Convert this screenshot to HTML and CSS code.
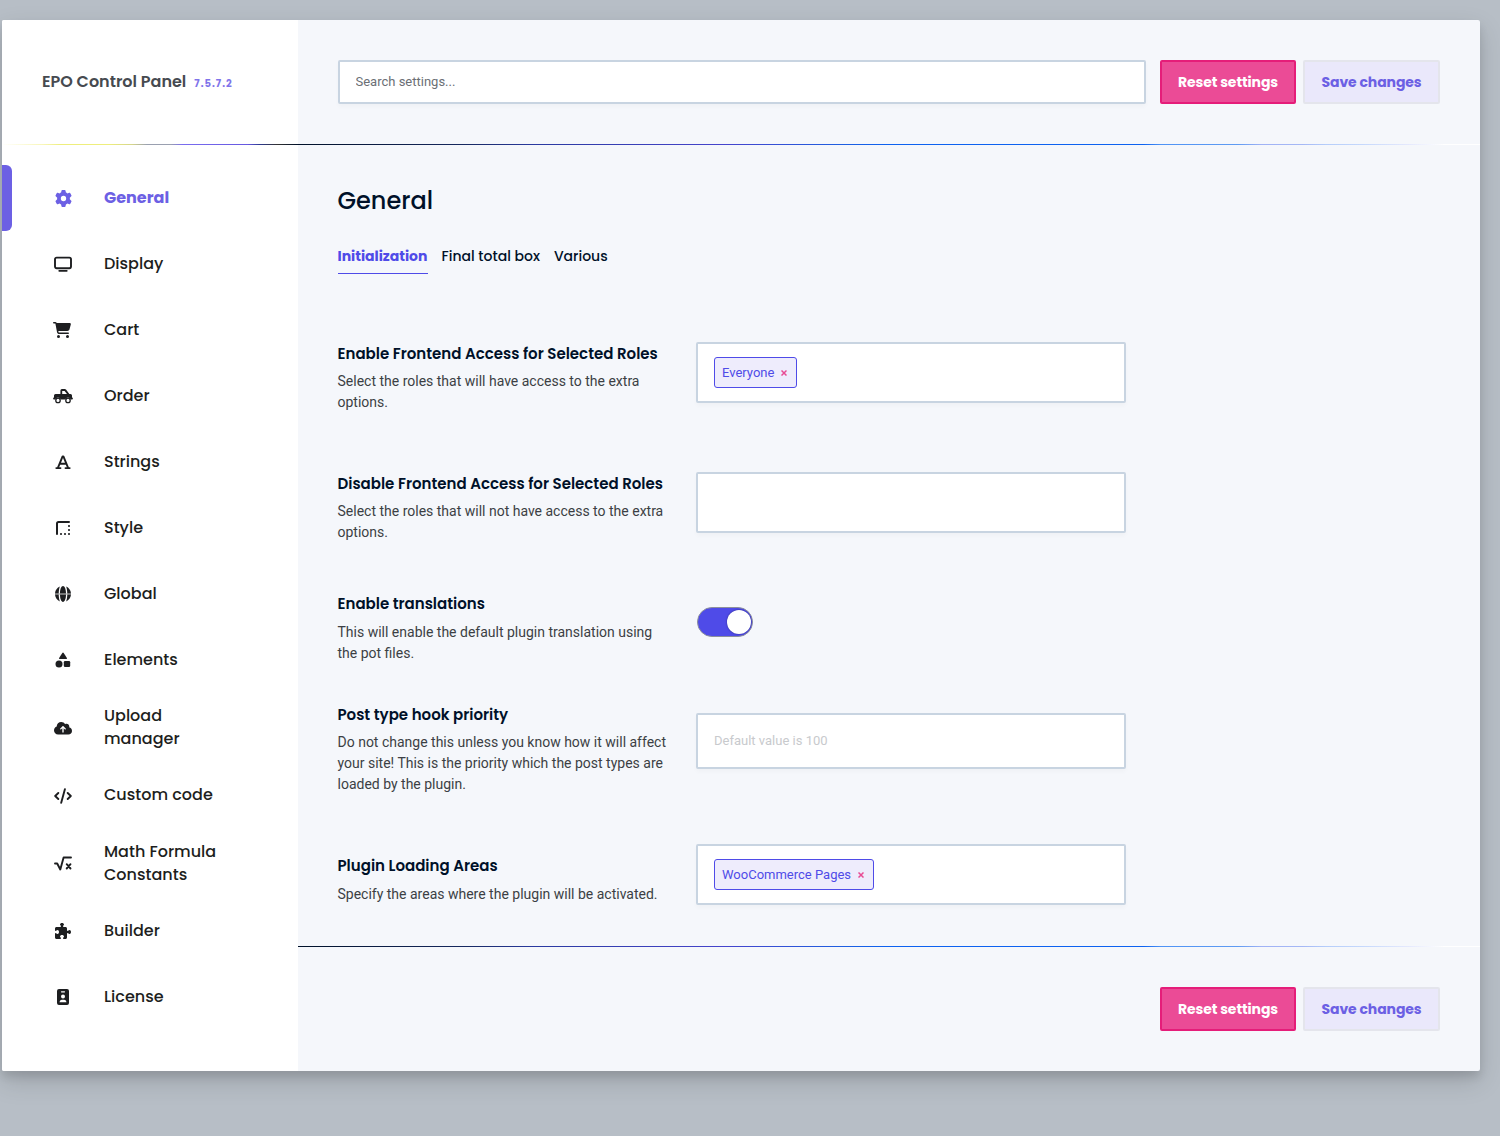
FILE: index.html
```html
<!DOCTYPE html>
<html lang="en">
<head>
<meta charset="utf-8">
<title>EPO Control Panel</title>
<link rel="stylesheet" href="styles.css">
</head>
<body>
<div class="panel">
  <aside class="sidebar">
    <div class="brand"><span class="brand-name">EPO Control Panel</span><span class="version">7.5.7.2</span></div>
    <nav class="nav">
      <a class="item active"><svg class="icon" width="17" height="17" viewBox="0 0 512 512"><path d="M495.9 166.6c3.2 8.7 .5 18.4-6.4 24.6l-43.3 39.4c1.1 8.3 1.7 16.8 1.7 25.4s-.6 17.1-1.7 25.4l43.3 39.4c6.9 6.2 9.6 15.9 6.4 24.6c-4.4 11.9-9.7 23.3-15.8 34.3l-4.7 8.1c-6.6 11-14 21.4-22.1 31.2c-5.9 7.2-15.7 9.6-24.5 6.8l-55.7-17.7c-13.4 10.3-28.2 18.9-44 25.4l-12.5 57.1c-2 9.1-9 16.3-18.2 17.8c-13.8 2.3-28 3.5-42.5 3.5s-28.7-1.2-42.5-3.5c-9.2-1.5-16.2-8.7-18.2-17.8l-12.5-57.1c-15.8-6.5-30.6-15.1-44-25.4L83.1 425.9c-8.8 2.8-18.6 .3-24.5-6.8c-8.1-9.8-15.5-20.2-22.1-31.2l-4.7-8.1c-6.1-11-11.4-22.4-15.8-34.3c-3.2-8.7-.5-18.4 6.4-24.6l43.3-39.4C64.6 273.1 64 264.6 64 256s.6-17.1 1.7-25.4L22.4 191.2c-6.9-6.2-9.6-15.9-6.4-24.6c4.4-11.9 9.7-23.3 15.8-34.3l4.7-8.1c6.6-11 14-21.4 22.1-31.2c5.9-7.2 15.7-9.6 24.5-6.8l55.7 17.7c13.4-10.3 28.2-18.9 44-25.4l12.5-57.1c2-9.1 9-16.3 18.2-17.8C227.3 1.2 241.5 0 256 0s28.7 1.2 42.5 3.5c9.2 1.5 16.2 8.7 18.2 17.8l12.5 57.1c15.8 6.5 30.6 15.1 44 25.4l55.7-17.7c8.8-2.8 18.6-.3 24.5 6.8c8.1 9.8 15.5 20.2 22.1 31.2l4.7 8.1c6.1 11 11.4 22.4 15.8 34.3zM256 336a80 80 0 1 0 0-160 80 80 0 1 0 0 160z"/></svg><span class="name">General</span></a>
      <a class="item"><svg class="icon" width="18" height="16" viewBox="0 0 18 16"><rect x="1" y="1.6" width="16" height="10.6" rx="1.6" fill="none" stroke="currentColor" stroke-width="1.9"/><path d="M5.2 14.8h7.6" stroke="currentColor" stroke-width="1.7" stroke-linecap="round"/></svg><span class="name">Display</span></a>
      <a class="item cart"><svg class="icon" width="18" height="16" viewBox="0 0 576 512"><path d="M0 24C0 10.7 10.7 0 24 0H69.5c22 0 41.5 12.8 50.6 32h411c26.3 0 45.5 25 38.6 50.4l-41 152.3c-8.5 31.4-37 53.3-69.5 53.3H170.7l5.4 28.5c2.2 11.3 12.1 19.5 23.6 19.5H488c13.3 0 24 10.7 24 24s-10.7 24-24 24H199.7c-34.6 0-64.3-24.6-70.7-58.5L77.4 54.5c-.7-3.8-4-6.5-7.9-6.5H24C10.7 48 0 37.3 0 24zM128 464a48 48 0 1 1 96 0 48 48 0 1 1 -96 0zm336-48a48 48 0 1 1 0 96 48 48 0 1 1 0-96z"/></svg><span class="name">Cart</span></a>
      <a class="item"><svg class="icon" width="20" height="16" viewBox="0 0 20 16"><path fill-rule="evenodd" d="M7.4 5.900V2.500Q7.400 1 8.900 1H11.700Q12.600 1 13.200 1.800L16.300 5.900H17.500Q19 5.900 19 7.400V9.500Q19.900 9.600 19.900 10.500T19 11.500H17.700A2.800 2.800 0 0 0 12.300 11.500H7.700A2.800 2.800 0 0 0 2.300 11.500H1Q.1 11.500.1 10.500T1 9.500V7.400Q1 5.900 2.500 5.900zM9.200 5.900H14L11.600 2.900H9.200z"/><circle cx="5" cy="12.400" r="2.200" fill="none" stroke="currentColor" stroke-width="1.300"/><circle cx="15" cy="12.400" r="2.200" fill="none" stroke="currentColor" stroke-width="1.300"/></svg><span class="name">Order</span></a>
      <a class="item"><svg class="icon" width="16" height="16" viewBox="0 0 16 16"><path d="M3 13.6L7.6 2.4h.8L13 13.6M4.7 9.8h6.6M1.3 14.1h4.2M10.5 14.1h4.2" fill="none" stroke="currentColor" stroke-width="1.9" stroke-linecap="round" stroke-linejoin="round"/></svg><span class="name">Strings</span></a>
      <a class="item"><svg class="icon" width="14" height="14" viewBox="0 0 14 14"><path d="M1 13V2.5Q1 1 2.5 1H13" fill="none" stroke="currentColor" stroke-width="2" stroke-linecap="round"/><path d="M4 12h2v2H4zM8 12h2v2H8zM12 12h2v2h-2zM12 8h2v2h-2zM12 4h2v2h-2z" opacity=".8"/></svg><span class="name">Style</span></a>
      <a class="item"><svg class="icon" width="16" height="16" viewBox="0 0 16 16"><path d="M8 0C9.7 0 11 3.2 11 7.4H5C5 3.2 6.3 0 8 0zM5 8.6h6C11 12.8 9.7 16 8 16S5 12.8 5 8.6zM4.9.6C4.2 2 3.8 4.6 3.7 7.4H0C.2 4.3 2.2 1.7 4.9.6zM11.1.6C13.8 1.7 15.8 4.3 16 7.4h-3.7C12.2 4.6 11.8 2 11.1.6zM0 8.6h3.7c.1 2.8.5 5.4 1.2 6.8C2.2 14.3.2 11.7 0 8.6zM12.3 8.6H16c-.2 3.1-2.2 5.7-4.9 6.8.7-1.4 1.1-4 1.2-6.8z"/><path d="M0 7.3h16v1.4H0z" opacity=".3"/></svg><span class="name">Global</span></a>
      <a class="item"><svg class="icon" width="16" height="16" viewBox="0 0 16 16"><path d="M7.3.9q.7-1 1.4 0L11.9 6q.5 1-.6 1H4.7q-1.1 0-.6-1z"/><circle cx="4" cy="12" r="3.5"/><rect x="8.8" y="8.9" width="6.4" height="6.2" rx="1.3"/></svg><span class="name">Elements</span></a>
      <a class="item tall upload"><svg class="icon" width="18" height="14.4" viewBox="0 0 640 512"><path fill-rule="evenodd" d="M144 480C64.5 480 0 415.5 0 336c0-62.8 40.2-116.2 96.2-135.9c-.1-2.7-.2-5.4-.2-8.1c0-88.4 71.6-160 160-160c59.3 0 111 32.2 138.7 80.2C409.9 102 428.3 96 448 96c53 0 96 43 96 96c0 12.2-2.3 23.8-6.4 34.6C596 238.4 640 290.1 640 352c0 70.7-57.3 128-128 128H144zm79-217c-9.400 9.400-9.400 24.600 0 33.900s24.600 9.400 33.900 0l39-39V392c0 13.300 10.700 24 24 24s24-10.700 24-24V257.900l39 39c9.400 9.400 24.600 9.400 33.900 0s9.400-24.600 0-33.900l-80-80c-9.400-9.400-24.600-9.400-33.900 0l-80 80z"/></svg><span class="name">Upload manager</span></a>
      <a class="item"><svg class="icon" width="18" height="16" viewBox="0 0 18 16"><path d="M10.9 1.2L7.2 14.8M4.3 5L1.2 8l3.1 3M13.7 5l3.1 3-3.1 3" fill="none" stroke="currentColor" stroke-width="1.9" stroke-linecap="round" stroke-linejoin="round"/></svg><span class="name">Custom code</span></a>
      <a class="item tall"><svg class="icon" width="18" height="16" viewBox="0 0 18 16"><path d="M1 8.500h2.200L6.300 14.500 9.600 2.500H17M12.700 9.200l3.800 4.300M16.500 9.200L12.700 13.500" fill="none" stroke="currentColor" stroke-width="1.900" stroke-linecap="round" stroke-linejoin="round"/></svg><span class="name">Math Formula Constants</span></a>
      <a class="item"><svg class="icon" width="16" height="16" viewBox="0 0 512 512"><path d="M192 104.800c0-9.200-5.800-17.300-13.200-22.800C167.200 73.300 160 61.300 160 48c0-26.500 28.700-48 64-48s64 21.500 64 48c0 13.300-7.200 25.300-18.800 34c-7.400 5.500-13.200 13.600-13.200 22.800c0 12.800 10.400 23.200 23.200 23.200H336c26.500 0 48 21.500 48 48v56.800c0 12.800 10.400 23.200 23.200 23.200c9.200 0 17.300-5.800 22.800-13.200c8.700-11.600 20.700-18.800 34-18.800c26.500 0 48 28.700 48 64s-21.500 64-48 64c-13.300 0-25.300-7.200-34-18.800c-5.500-7.400-13.600-13.200-22.800-13.200c-12.800 0-23.200 10.400-23.200 23.200V464c0 26.500-21.500 48-48 48H279.200c-12.800 0-23.200-10.400-23.200-23.200c0-9.200 5.800-17.300 13.200-22.800c11.600-8.700 18.800-20.700 18.800-34c0-26.500-28.700-48-64-48s-64 21.500-64 48c0 13.300 7.200 25.300 18.800 34c7.400 5.500 13.200 13.600 13.200 22.800c0 12.800-10.400 23.200-23.200 23.200H48c-26.500 0-48-21.500-48-48V343.200C0 330.400 10.400 320 23.200 320c9.200 0 17.300 5.800 22.800 13.200C54.700 344.800 66.700 352 80 352c26.500 0 48-28.700 48-64s-21.500-64-48-64c-13.300 0-25.300 7.200-34 18.800C40.500 250.200 32.400 256 23.200 256C10.400 256 0 245.600 0 232.800V176c0-26.500 21.500-48 48-48H168.800c12.800 0 23.200-10.400 23.200-23.200z"/></svg><span class="name">Builder</span></a>
      <a class="item"><svg class="icon" width="12" height="16" viewBox="0 0 12 16"><path fill-rule="evenodd" d="M2 0h8q2 0 2 2v12q0 2-2 2H2q-2 0-2-2V2Q0 0 2 0zM4.500 2.200q-.6 0-.6.6t.6.600h3q.6 0 .6-.6t-.6-.6zM6 5.600a2 2 0 1 0 0 4a2 2 0 1 0 0-4zM4.700 10.700Q2.600 10.900 2.500 13.300h7Q9.400 10.900 7.300 10.700z"/></svg><span class="name">License</span></a>
    </nav>
  </aside>
  <main class="main">
    <header class="topbar">
      <input class="search" type="text" placeholder="Search settings...">
      <button class="btn reset">Reset settings</button>
      <button class="btn save">Save changes</button>
    </header>
    <section class="content">
      <h1 class="title">General</h1>
      <div class="tabs"><a class="tab current">Initialization</a><a class="tab">Final total box</a><a class="tab">Various</a></div>
      <div class="row r1">
        <div class="info"><h2 class="label">Enable Frontend Access for Selected Roles</h2><p class="desc">Select the roles that will have access to the extra options.</p></div>
        <div class="box"><span class="tag">Everyone<svg class="x" width="6" height="6" viewBox="0 0 6 6"><path d="M.5.5l5 5M5.5.5l-5 5"/></svg></span></div>
      </div>
      <div class="row r2">
        <div class="info"><h2 class="label">Disable Frontend Access for Selected Roles</h2><p class="desc">Select the roles that will not have access to the extra options.</p></div>
        <div class="box"></div>
      </div>
      <div class="row r3">
        <div class="info"><h2 class="label">Enable translations</h2><p class="desc">This will enable the default plugin translation using the pot files.</p></div>
        <div class="toggle"><span class="knob"></span></div>
      </div>
      <div class="row r4">
        <div class="info"><h2 class="label">Post type hook priority</h2><p class="desc">Do not change this unless you know how it will affect your site! This is the priority which the post types are loaded by the plugin.</p></div>
        <input class="box field" type="text" placeholder="Default value is 100">
      </div>
      <div class="row r5">
        <div class="info"><h2 class="label">Plugin Loading Areas</h2><p class="desc">Specify the areas where the plugin will be activated.</p></div>
        <div class="box"><span class="tag">WooCommerce Pages<svg class="x" width="6" height="6" viewBox="0 0 6 6"><path d="M.5.5l5 5M5.5.5l-5 5"/></svg></span></div>
      </div>
    </section>
    <footer class="bottombar">
      <button class="btn reset">Reset settings</button>
      <button class="btn save">Save changes</button>
    </footer>
  </main>
</div>
</body>
</html>
```
FILE: styles.css
```css
* { box-sizing: border-box; }

body {
  margin: 0;
  height: 1136px;
  padding: 20px 20px 0 2px;
  overflow: hidden;
  background: #b7bec6;
  font-family: Roboto, sans-serif;
  color: #001129;
}

.panel {
  display: flex;
  height: 1051px;
  border-radius: 2px;
  background: #f5f7fb;
  box-shadow: 0 6px 8px rgba(0, 0, 0, .1), 0 10px 26px rgba(0, 0, 0, .15);
}

.sidebar {
  width: 296px;
  background: #fff;
  border-radius: 2px 0 0 2px;
}

.brand, .nav, .btn, .title, .tab, .label { font-family: Poppins, Inter, sans-serif; }

.brand {
  display: flex;
  align-items: center;
  height: 125px;
  padding: 0 0 2px 40px;
  background: linear-gradient(90deg, #fff 0, #f8f6b8 14%, #eeee7c 20%, #eeee7c 36%, #d5d58b 44%, #9aa0b0 49%, #9aa0b0 57%, #7a6df0 61%, #6658e0 83%, #2d3a91 87%, #333 93%, #001129 100%) bottom / 100% 1px no-repeat;
}
.brand-name { font-size: 16px; font-weight: 600; color: #464a50; }
.version { margin: 4px 0 0 8px; font-size: 10px; font-weight: 700; letter-spacing: 1px; color: #7f74ea; }

.nav { padding-top: 20px; }
.item {
  display: grid;
  grid-template: 100% / 102px 118px;
  align-items: center;
  height: 66px;
  font-size: 16px;
  font-weight: 500;
  line-height: 23px;
  color: #1d1e20;
}
.item.tall { height: 69.5px; }
.item.active { grid-template-columns: 10px 92px 118px; color: #6c60e4; font-weight: 700; }
.item.active::before { content: ""; height: 66px; border-radius: 0 6px 6px 0; background: #6c60e4; }
.icon { justify-self: center; margin-left: 20px; fill: currentColor; }
.active .icon { margin-left: 10px; }
.cart .icon { margin-left: 18px; }
.name { margin-top: -2px; }
.tall .name { margin-top: 0; }
.upload .name { margin-top: -2px; }

.main { flex: 1; }
.topbar, .content { background: linear-gradient(90deg, #001129 0, #17295f 14%, #2a3aa0 20%, #4644cc 36%, #1f5fe0 46%, #0d62f0 50%, #0d62f0 71.5%, #4f93f5 73%, #5f9bf2 79.5%, #a0b2f5 81.5%, #a5b8f5 85%, #b5cdfa 87%, #c5d8fc 90%, #e5e9fd 94%, #fff 97%) bottom / 100% 1px no-repeat; }
.topbar {
  display: flex;
  align-items: flex-start;
  height: 125px;
  padding: 40px 40px 0;
}
.search, .box {
  border: 2px solid #c8d4e1;
  border-radius: 2px;
  background: #fff;
  box-shadow: 0 3px 4px rgba(0, 0, 40, .025);
}
.search {
  flex: 1;
  height: 44px;
  margin-right: 14px;
  padding: 0 15px 2px 15.5px;
  font: 13px Roboto, sans-serif;
}
.search::placeholder { color: #6b6f75; }
.btn {
  height: 44px;
  padding: 0;
  border: 2px solid;
  border-radius: 2px;
  font-size: 14px;
  font-weight: 700;
  letter-spacing: -.1px;
  white-space: nowrap;
}
.reset { width: 136px; margin-right: 7px; color: #fff; background: #eb4b96; border-color: #e51d79; }
.save { width: 137px; color: #6c60e4; background: #eae8fb; border-color: #e4e5ec; }

.content { height: 802px; padding: 36px 40px 0 39.5px; }
.title { margin: 0; font-size: 24px; line-height: 40px; font-weight: 500; }
.tabs { display: flex; gap: 13.5px; margin: 23px 0 68px; }
.tab { height: 30px; font-size: 14px; line-height: 24px; font-weight: 500; white-space: nowrap; }
.tab + .tab + .tab { margin-left: .5px; }
.tab.current { padding-right: .6px; font-weight: 700; color: #4f4be8; border-bottom: 1px solid #4f4be8; }

.row { display: flex; align-items: flex-start; }
.info { width: 358.5px; padding-right: 29px; }
.label { margin: 0; font-size: 15px; line-height: 24px; font-weight: 600; white-space: nowrap; }
.desc { margin: 5px 0 0; font-size: 14px; line-height: 21px; color: #3c3f44; }
.box { width: 430px; height: 61px; padding: 13px 16px; }
.r1 { height: 130px; }
.r2 { height: 120px; }
.r3 { height: 111px; }
.r4 { height: 141px; }
.r3 .desc, .r5 .desc { margin-top: 6px; }
.r5 .info { padding-top: 10px; }
.r3 .toggle { margin-top: 15px; }
.r4 .box { height: 56px; margin-top: 10px; padding: 0 16px 2px; }
.field { font: 13px Roboto, sans-serif; }
.field::placeholder { color: #c8cacd; }

.tag {
  display: inline-flex;
  align-items: center;
  height: 31px;
  padding: 0 9px 0 7px;
  border: 1px solid #4f4be8;
  border-radius: 3px;
  background: #eeecfc;
  color: #4f4be8;
  font-size: 13px;
}
.x { margin-left: 7px; stroke: #e84b94; stroke-width: 1.5; }

.toggle {
  display: flex;
  justify-content: flex-end;
  width: 56px;
  height: 30px;
  margin-left: 1px;
  padding: 2px 1px;
  border: 1px solid #8c8f9c;
  border-radius: 15px;
  background: #4f4be8;
}
.knob { width: 24px; height: 24px; border-radius: 50%; background: #fff; box-shadow: 0 0 2px rgba(0, 0, 40, .5); }

.bottombar { display: flex; justify-content: flex-end; padding: 40px 40px 0; }
```
